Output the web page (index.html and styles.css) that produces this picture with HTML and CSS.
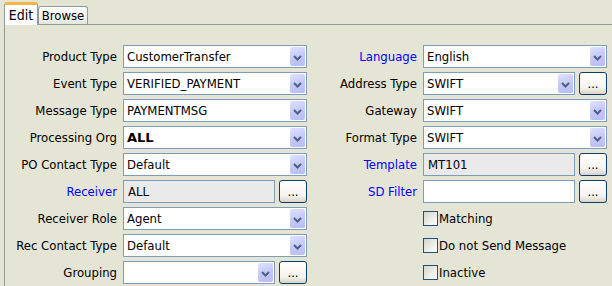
FILE: index.html
```html
<!DOCTYPE html>
<html>
    <head>
        <meta name="viewport" content="width=device-width"/>
        <title>Edit</title>
        <link rel="stylesheet" href="styles.css">
    </head>
    <body>
        <div class="tabs">
            <div class="tab tab-on">Edit</div>
            <div class="tab">Browse</div>
        </div>
        <div class="panel">
            <div class="form">
                <!-- row 1 -->
                <span class="lbl">Product Type</span>
                <div class="field"><div class="combo"><span class="val">CustomerTransfer</span><span class="arrow"><svg width="15" height="21"><path d="M4 9 L7.5 12.5 L11 9"/></svg></span></div></div>
                <span class="lbl blue">Language</span>
                <div class="field"><div class="combo"><span class="val">English</span><span class="arrow"><svg width="15" height="21"><path d="M4 9 L7.5 12.5 L11 9"/></svg></span></div></div>

                <!-- row 2 -->
                <span class="lbl">Event Type</span>
                <div class="field"><div class="combo"><span class="val">VERIFIED_PAYMENT</span><span class="arrow"><svg width="15" height="21"><path d="M4 9 L7.5 12.5 L11 9"/></svg></span></div></div>
                <span class="lbl">Address Type</span>
                <div class="field"><div class="combo"><span class="val">SWIFT</span><span class="arrow"><svg width="15" height="21"><path d="M4 9 L7.5 12.5 L11 9"/></svg></span></div><button class="more">...</button></div>

                <!-- row 3 -->
                <span class="lbl">Message Type</span>
                <div class="field"><div class="combo"><span class="val">PAYMENTMSG</span><span class="arrow"><svg width="15" height="21"><path d="M4 9 L7.5 12.5 L11 9"/></svg></span></div></div>
                <span class="lbl">Gateway</span>
                <div class="field"><div class="combo"><span class="val">SWIFT</span><span class="arrow"><svg width="15" height="21"><path d="M4 9 L7.5 12.5 L11 9"/></svg></span></div></div>

                <!-- row 4 -->
                <span class="lbl">Processing Org</span>
                <div class="field"><div class="combo"><span class="val bold">ALL</span><span class="arrow"><svg width="15" height="21"><path d="M4 9 L7.5 12.5 L11 9"/></svg></span></div></div>
                <span class="lbl">Format Type</span>
                <div class="field"><div class="combo"><span class="val">SWIFT</span><span class="arrow"><svg width="15" height="21"><path d="M4 9 L7.5 12.5 L11 9"/></svg></span></div></div>

                <!-- row 5 -->
                <span class="lbl">PO Contact Type</span>
                <div class="field"><div class="combo"><span class="val">Default</span><span class="arrow"><svg width="15" height="21"><path d="M4 9 L7.5 12.5 L11 9"/></svg></span></div></div>
                <span class="lbl blue">Template</span>
                <div class="field"><div class="text ro">MT101</div><button class="more">...</button></div>

                <!-- row 6 -->
                <span class="lbl blue">Receiver</span>
                <div class="field"><div class="text ro">ALL</div><button class="more">...</button></div>
                <span class="lbl blue">SD Filter</span>
                <div class="field"><div class="text"></div><button class="more">...</button></div>

                <!-- row 7 -->
                <span class="lbl">Receiver Role</span>
                <div class="field"><div class="combo"><span class="val">Agent</span><span class="arrow"><svg width="15" height="21"><path d="M4 9 L7.5 12.5 L11 9"/></svg></span></div></div>
                <span class="lbl"></span>
                <div class="field"><span class="check"></span><span class="check-text">Matching</span></div>

                <!-- row 8 -->
                <span class="lbl">Rec Contact Type</span>
                <div class="field"><div class="combo"><span class="val">Default</span><span class="arrow"><svg width="15" height="21"><path d="M4 9 L7.5 12.5 L11 9"/></svg></span></div></div>
                <span class="lbl"></span>
                <div class="field"><span class="check"></span><span class="check-text">Do not Send Message</span></div>

                <!-- row 9 -->
                <span class="lbl">Grouping</span>
                <div class="field"><div class="combo"><span class="val"></span><span class="arrow"><svg width="15" height="21"><path d="M4 9 L7.5 12.5 L11 9"/></svg></span></div><button class="more">...</button></div>
                <span class="lbl"></span>
                <div class="field"><span class="check"></span><span class="check-text">Inactive</span></div>
            </div>
        </div>
    </body>
</html>
```

FILE: styles.css
```css
body {
    margin: 0;
    background: #e5e5d6;
    font-family: "DejaVu Sans Condensed", "DejaVu Sans", sans-serif;
    font-size: 13px;
    color: #000;
}

/* tabs */
.tabs {
    display: flex;
    align-items: flex-end;
    height: 24px;
    padding-left: 4px;
}
.tab {
    width: 48px;
    height: 17px;
    border: 1px solid #919b9c;
    border-bottom: none;
    border-radius: 3px 3px 0 0;
    background: linear-gradient(#ffffff, #f3f3ef 60%, #e6e5dc);
    line-height: 18px;
    text-align: center;
}
.tab-on {
    position: relative; /* sits over the panel top line */
    z-index: 1;
    width: 32px;
    height: 20px;
    margin-bottom: -1px;
    border-top: 3px solid #f5b542;
    background: #fcfcfe;
    line-height: 20px;
    font-size: 14px;
}

/* panel */
.panel {
    margin-left: 4px;
    padding: 20px 0 2px;
    border-top: 1px solid #919b9c;
    border-left: 1px solid #919b9c;
}
.form {
    display: grid;
    grid-template-columns: 112px 184px 104px 184px;
    grid-auto-rows: 23px;
    column-gap: 6px;
    row-gap: 4px;
}
.lbl {
    text-align: right;
    line-height: 23px;
    white-space: nowrap;
}
.blue {
    color: #0000ff;
}
.field {
    display: flex;
    align-items: center;
    gap: 4px;
}

/* combo box */
.combo, .text {
    flex: 1;
    display: flex;
    height: 23px;
    box-sizing: border-box;
    border: 1px solid #7f9db9;
    background: #fff;
}
.combo {
    padding: 1px;
}
.val {
    flex: 1;
    padding-left: 2px;
    line-height: 20px;
    white-space: nowrap;
    overflow: hidden;
}
.bold {
    font-weight: bold;
    font-family: "DejaVu Sans", sans-serif;
    font-size: 13px;
}
.arrow {
    width: 15px;
    border-radius: 2px;
    background: linear-gradient(160deg, #dfe2fc, #c6c9f7 50%, #b7bcf1);
}
.arrow svg {
    display: block;
}
.arrow path {
    fill: none;
    stroke: #4d6185;
    stroke-width: 2;
}
.text {
    padding-left: 4px;
    line-height: 21px;
}
.ro {
    background: #eaeaea;
}

/* ... button */
.more {
    width: 28px;
    height: 23px;
    padding: 0;
    border: 1px solid #0f3c6e;
    border-radius: 3px;
    background: linear-gradient(#ffffff, #f4f3ee 70%, #d8d4c8);
    font-family: inherit;
    font-size: 13px;
    line-height: 22px;
    color: #000;
}

/* checkbox */
.check {
    width: 15px;
    height: 15px;
    box-sizing: border-box;
    border: 1px solid #1c5180;
    background: linear-gradient(135deg, #d6d5cd, #f3f3ef 70%, #ffffff);
}
.check-text {
    margin-left: -3px;
    white-space: nowrap;
}
```
